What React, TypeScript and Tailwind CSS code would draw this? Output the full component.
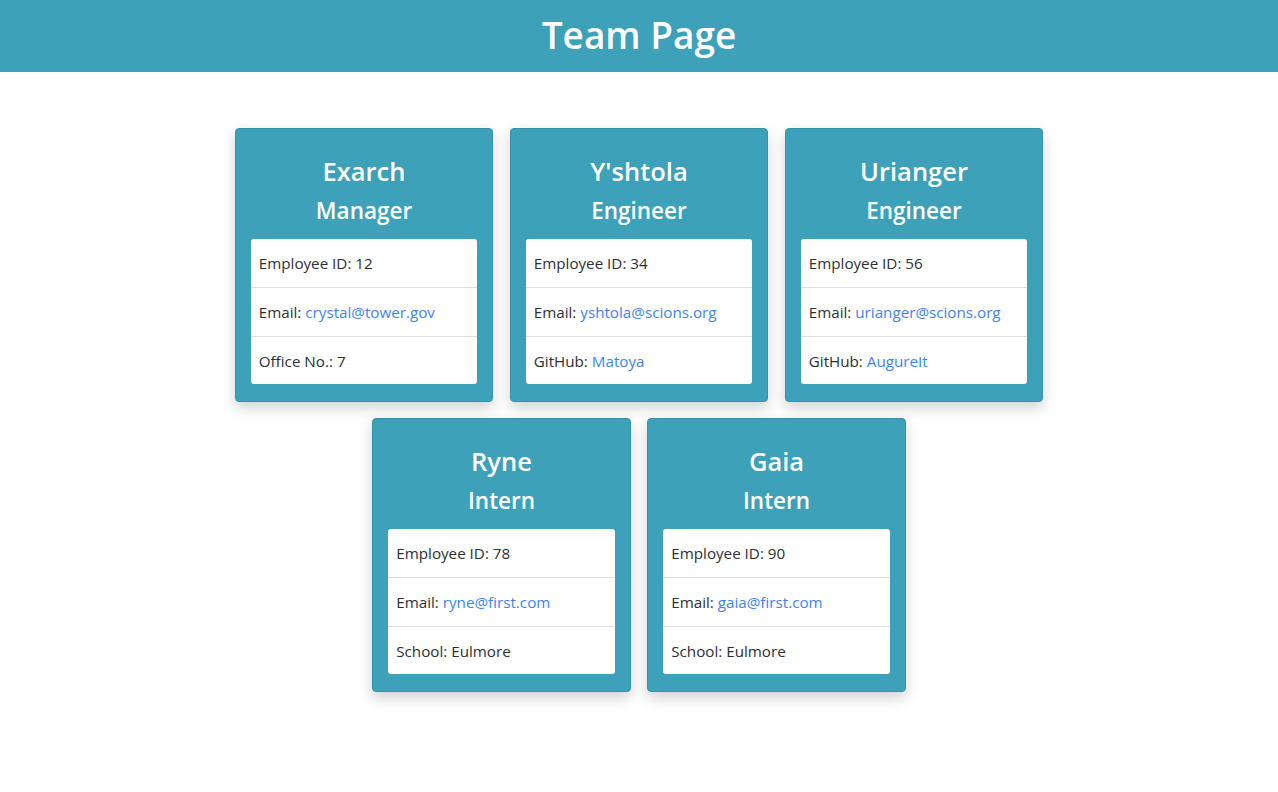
import React from "react";

type Emp = { name: string; role: string; id: number; email: string; extraLabel: string; extra: string; link?: boolean };

const row1: Emp[] = [
  { name: "Exarch", role: "Manager", id: 12, email: "crystal@tower.gov", extraLabel: "Office No.:", extra: "7" },
  { name: "Y'shtola", role: "Engineer", id: 34, email: "yshtola@scions.org", extraLabel: "GitHub:", extra: "Matoya", link: true },
  { name: "Urianger", role: "Engineer", id: 56, email: "urianger@scions.org", extraLabel: "GitHub:", extra: "AugureIt", link: true },
];
const row2: Emp[] = [
  { name: "Ryne", role: "Intern", id: 78, email: "ryne@first.com", extraLabel: "School:", extra: "Eulmore" },
  { name: "Gaia", role: "Intern", id: 90, email: "gaia@first.com", extraLabel: "School:", extra: "Eulmore" },
];

function Card({ e }: { e: Emp }) {
  return (
    <div className="w-[258.5px] h-[274px] bg-[#3ca1b9] border border-[#3592a9] rounded-[4px] shadow-[0_6px_14px_rgba(0,0,0,0.18)] px-[15px] pt-[25px] pb-[16px] flex flex-col">
      <div className="text-white text-center font-semibold text-[25.5px] leading-[34px]">{e.name}</div>
      <div className="text-white text-center font-semibold text-[22.5px] leading-[29px] mt-[8px]">{e.role}</div>
      <div className="mt-[14px] bg-white rounded-[3px] text-[#2b2f33] text-[15.2px] leading-[24px]">
        <div className="px-[8px] py-[12px] border-b border-[#dfdfdf]">Employee ID: {e.id}</div>
        <div className="px-[8px] py-[12px] border-b border-[#dfdfdf]">
          Email: <a className="text-[#3d83f7]">{e.email}</a>
        </div>
        <div className="px-[8px] py-[12px] h-[47px]">
          {e.extraLabel} {e.link ? <a className="text-[#3d83f7]">{e.extra}</a> : e.extra}
        </div>
      </div>
    </div>
  );
}

export default function App() {
  return (
    <div className="min-h-[792px] bg-white" style={{ fontFamily: '"Open Sans", "Noto Sans", sans-serif' }}>
      <header className="h-[72px] bg-[#3ca1b9] flex items-center justify-center pb-[3px]">
        <h1 className="text-white text-[37px] font-semibold leading-none">Team Page</h1>
      </header>
      <main className="pt-[56px] flex flex-col items-center gap-[16px]">
        <div className="flex gap-[16.5px]">
          {row1.map((e) => <Card key={e.name} e={e} />)}
        </div>
        <div className="flex gap-[16.5px]">
          {row2.map((e) => <Card key={e.name} e={e} />)}
        </div>
      </main>
    </div>
  );
}
